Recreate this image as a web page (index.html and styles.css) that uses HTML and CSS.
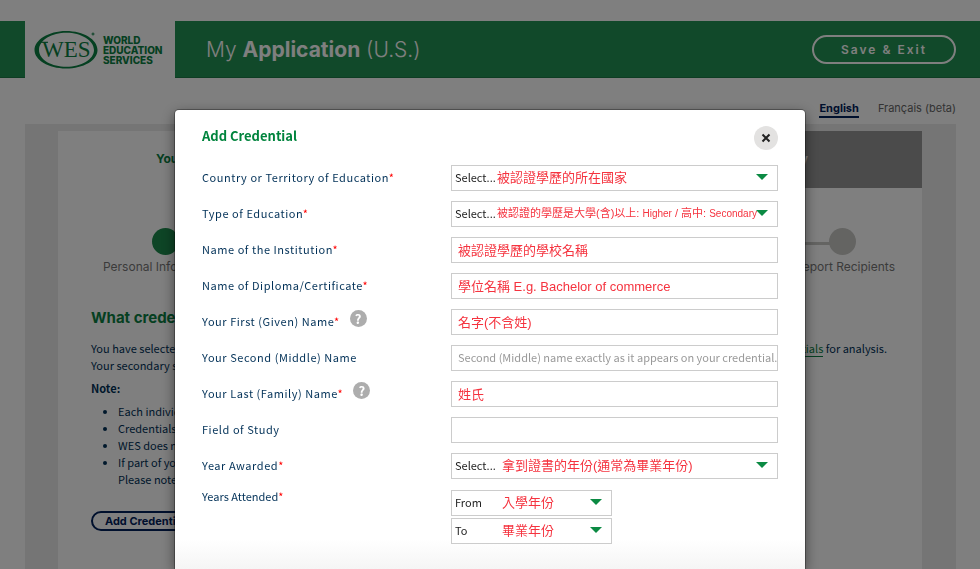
FILE: index.html
```html
<!DOCTYPE html>
<html lang="en">
<head>
<meta charset="utf-8">
<meta name="viewport" content="width=device-width, initial-scale=1">
<title>My Application (U.S.)</title>
<link rel="stylesheet" href="styles.css">
</head>
<body>
<div class="page">
  <header class="topbar">
    <a class="logo" href="#" aria-label="World Education Services">
      <svg class="logo-mark" viewBox="0 0 64 40" width="64" height="40" aria-hidden="true">
        <path fill-rule="evenodd" d="M32 1C49.500 1 63.500 9.500 63.500 20S49.500 38.500 32 38.500S.5 30 .5 20S14.500 1 32 1ZM32.500 2.800C18 2.800 5 10 5 20S18 36.800 32.500 36.800S60 29.500 60 20S47 2.800 32.500 2.800Z"/>
        <path d="M6 11.800h8v1H5.500z"/>
        <text class="logo-letters" x="8" y="27">WES</text>
        <circle class="logo-reg" cx="59" cy="4" r="1"/>
      </svg>
      <span class="logo-name">WORLD<br>EDUCATION<br>SERVICES</span>
    </a>
    <div class="title-bar">
      <h1 class="title">My <b>Application</b> (U.S.)</h1>
      <button class="save" type="button">Save &amp; Exit</button>
    </div>
  </header>

  <nav class="languages" aria-label="Language">
    <a class="lang lang-current" href="#">English</a>
    <a class="lang" href="#">Français (beta)</a>
  </nav>

  <main class="panel">
    <div class="card">
      <div class="tabs">
        <a class="tab tab-current" href="#">Your Info</a>
        <a class="tab" href="#">Summary</a>
      </div>
      <ol class="steps">
        <li class="step step-done"><span class="dot"></span>Personal Info</li>
        <li class="step"><span class="dot"></span>Report Recipients</li>
      </ol>
      <section class="copy">
        <h2 class="question">What credentials</h2>
        <p class="line-split"><span>You have selected</span><span><a class="inline-link" href="#">credentials</a> for analysis.</span></p>
        <p>Your secondary school</p>
        <p class="note"><b>Note:</b></p>
        <ul class="notes">
          <li>Each individual</li>
          <li>Credentials</li>
          <li>WES does not</li>
          <li>If part of your<br>Please note</li>
        </ul>
        <button class="add" type="button">Add Credential</button>
      </section>
    </div>
  </main>
</div>

<div class="overlay">
  <section class="dialog" role="dialog" aria-modal="true" aria-labelledby="dialog-title">
    <div class="dialog-head">
      <h2 class="dialog-title" id="dialog-title">Add Credential</h2>
      <button class="close" type="button" aria-label="Close">
        <svg viewBox="0 0 10 10" width="10" height="10" aria-hidden="true"><path d="M1.500 1.500L8.500 8.500M8.500 1.500L1.500 8.500"/></svg>
      </button>
    </div>
    <form class="form">
      <div class="row">
        <label for="country">Country or Territory of Education<i>*</i></label>
        <div class="pick"><select id="country"><option>Select...</option></select><span class="hint">被認證學歷的所在國家</span></div>
      </div>
      <div class="row">
        <label for="type">Type of Education<i>*</i></label>
        <div class="pick"><select id="type"><option>Select...</option></select><span class="hint hint-small">被認證的學歷是大學(含)以上: <small>Higher</small> / 高中: <small>Secondary</small></span></div>
      </div>
      <div class="row">
        <label for="school">Name of the Institution<i>*</i></label>
        <input id="school" type="text" value="被認證學歷的學校名稱">
      </div>
      <div class="row">
        <label for="diploma">Name of Diploma/Certificate<i>*</i></label>
        <input id="diploma" type="text" value="學位名稱 E.g. Bachelor of commerce">
      </div>
      <div class="row">
        <div class="label-help">
          <label for="first">Your First (Given) Name<i>*</i></label>
          <button class="help" type="button" aria-label="Help with first name">?</button>
        </div>
        <input id="first" type="text" value="名字(不含姓)">
      </div>
      <div class="row">
        <label for="second">Your Second (Middle) Name</label>
        <input id="second" type="text" placeholder="Second (Middle) name exactly as it appears on your credential.">
      </div>
      <div class="row">
        <div class="label-help">
          <label for="last">Your Last (Family) Name<i>*</i></label>
          <button class="help" type="button" aria-label="Help with last name">?</button>
        </div>
        <input id="last" type="text" value="姓氏">
      </div>
      <div class="row">
        <label for="field">Field of Study</label>
        <input id="field" type="text">
      </div>
      <div class="row">
        <label for="awarded">Year Awarded<i>*</i></label>
        <div class="pick"><select id="awarded"><option>Select...</option></select><span class="hint hint-wide">拿到證書的年份(通常為畢業年份)</span></div>
      </div>
      <div class="row row-years">
        <label class="plain" for="from">Years Attended<i>*</i></label>
        <div class="years">
          <div class="pick"><select id="from"><option>From</option></select><span class="hint hint-wide">入學年份</span></div>
          <div class="pick"><select id="to" aria-label="To year"><option>To</option></select><span class="hint hint-wide">畢業年份</span></div>
        </div>
      </div>
    </form>
  </section>
</div>
</body>
</html>
```
FILE: styles.css
```css
:root {
  --body-font: "Noto Sans CJK TC", "Noto Sans", sans-serif;
  --head-font: Inter, "Open Sans", sans-serif;
  --note-font: "Liberation Sans", "Noto Sans CJK TC", sans-serif;
  --navy: #003057;
}

* { box-sizing: border-box; }

body {
  margin: 0;
  background: #fff;
  color: var(--navy);
  font: 11px/17px var(--body-font);
}

h1, h2, p, ul, ol { margin: 0; padding: 0; }
a { color: inherit; text-decoration: none; }
button, input, select { margin: 0; font: inherit; color: inherit; }

.page {
  display: flex;
  flex-direction: column;
  height: 100vh;
  overflow: hidden;
}

.topbar {
  display: flex;
  flex: none;
  margin-top: 21px;
  background: #229254;
  border-bottom: 1px solid #1c7a46;
}

.logo {
  display: flex;
  align-items: center;
  gap: 5px;
  width: 150px;
  height: 57px;
  margin: 0 0 -1px 25px;
  padding-left: 9px;
  background: #fff;
  color: #0b8043;
}

.logo-mark { flex: none; fill: #0b8043; }
.logo-letters { font: 23px "Liberation Serif", serif; }
.logo-reg { fill: none; stroke: #0b8043; stroke-width: 1px; }
.logo-name { font: 800 10px/10px var(--head-font); }

.title-bar {
  display: flex;
  flex: 1;
  align-items: center;
  justify-content: space-between;
  padding: 1px 24px 0 31px;
  color: #fff;
}

.title { font: 300 21px/28px var(--head-font); }
.title b { font-weight: 700; }

.save {
  width: 144px;
  height: 29px;
  padding: 0;
  border: 2px solid #fff;
  border-radius: 15px;
  background: none;
  font: 600 12px/16px var(--head-font);
  letter-spacing: 2px;
}

.languages {
  display: flex;
  flex: none;
  justify-content: flex-end;
  gap: 19px;
  padding: 23px 24px 6px;
  font: 11px/14px var(--head-font);
}

.lang { padding-bottom: 1px; border-bottom: 2px solid transparent; color: #666; }
.lang-current { border-color: #00205b; color: #00205b; font-weight: 700; }

.panel {
  flex: 1;
  margin: 0 24px 0 25px;
  padding: 7px 34px 0 33px;
  background: #eaeaea;
}

.card { height: 100%; background: #fff; }
.tabs { display: flex; }

.tab {
  flex: 1;
  height: 57px;
  padding-right: 114px;
  background: #979797;
  color: #fff;
  font: 700 12px/56px var(--head-font);
  text-align: right;
}

.tab-current {
  padding: 0 0 0 98px;
  background: #fff;
  color: #0b8043;
  text-align: left;
}

.steps {
  position: relative;
  display: flex;
  justify-content: space-between;
  margin: 40px 27px 0 45px;
  list-style: none;
  color: #777;
  font: 12px/16px var(--head-font);
}

.steps::before {
  content: "";
  position: absolute;
  top: 14px;
  left: 62px;
  right: 62px;
  height: 3px;
  background: #c8c8c5;
}

.step {
  display: flex;
  flex-direction: column;
  gap: 4px;
  width: 105px;
  text-align: right;
}

.step-done { width: 124px; text-align: left; }

.dot {
  position: relative;
  align-self: center;
  width: 27px;
  height: 27px;
  border-radius: 50%;
  background: #c8c8c5;
}

.step-done .dot { background: #1c8a4c; }

.copy { padding: 33px 35px 0 33px; }
.question { margin-bottom: 12px; color: #0b8043; font: 700 15px/20px var(--head-font); }
.line-split { display: flex; justify-content: space-between; }
.inline-link { border-bottom: 1px solid #0b8043; color: #0b8043; }
.note { margin: 6px 0; }
.notes { padding-left: 27px; }

.add {
  width: 108px;
  height: 20px;
  margin-top: 23px;
  padding: 0;
  border: 2px solid #00205b;
  border-radius: 10px;
  background: none;
  color: #00205b;
  font: 700 11px/14px var(--head-font);
}

.overlay {
  position: fixed;
  inset: 0;
  display: flex;
  justify-content: center;
  padding: 110px 16px 0;
  background: rgba(0, 0, 0, 0.5);
}

.dialog {
  width: 100%;
  max-width: 630px;
  padding: 13px 27px 0;
  border-radius: 4px 4px 0 0;
  background: linear-gradient(to top, #f5f5f5, #fff 30px);
  box-shadow: 0 0 0 1px rgba(0, 0, 0, 0.3), 0 4px 14px rgba(0, 0, 0, 0.5);
}

.dialog-head { display: flex; justify-content: space-between; }
.dialog-title { color: #00843d; font: 700 13px/26px var(--body-font); }

.close {
  display: grid;
  place-items: center;
  width: 24px;
  height: 24px;
  margin-top: 3px;
  padding: 0;
  border: 0;
  border-radius: 50%;
  background: #e3e2e1;
}

.close path { fill: none; stroke: #222; stroke-width: 2px; }

.form { display: grid; gap: 10px; padding-top: 15px; }

.row {
  display: grid;
  grid-template-columns: 249px 1fr;
  height: 26px;
}

.row label { line-height: 25px; letter-spacing: 0.05em; }
.row .plain { line-height: 14px; letter-spacing: 0; }
.row i { color: #f00; font-style: normal; }
.label-help { display: flex; gap: 10px; }

.help {
  width: 17px;
  height: 17px;
  margin-top: 1px;
  padding: 0;
  border: 0;
  border-radius: 50%;
  background: #adadad;
  color: #fff;
  font: 700 13px/17px var(--body-font);
}

input, select {
  width: 100%;
  height: 26px;
  border: 1px solid #ccc;
  border-radius: 0;
  background: #fff;
  outline: none;
}

input { padding: 0 0 1px 6px; color: #f5333f; font: 13px/24px var(--note-font); }
input::placeholder { color: #999; font: 11px/24px var(--body-font); opacity: 1; }
select { appearance: none; padding: 0 3px 2px; color: #222; }

.pick { position: relative; }

.pick::after {
  content: "";
  position: absolute;
  top: 9px;
  right: 10px;
  width: 12px;
  height: 6px;
  background: #0b8a43;
  clip-path: polygon(0 0, 100% 0, 50% 100%);
  pointer-events: none;
}

.hint {
  position: absolute;
  top: 0;
  left: 46px;
  color: #f5333f;
  font: 13px/25px var(--note-font);
  white-space: nowrap;
  pointer-events: none;
}

.hint-small { font-size: 11px; }
.hint-small small { font-size: 10px; }
.hint-wide { left: 51px; }

.row-years { height: auto; }
.years { display: grid; gap: 2px; width: 161px; padding-top: 1px; }
```
